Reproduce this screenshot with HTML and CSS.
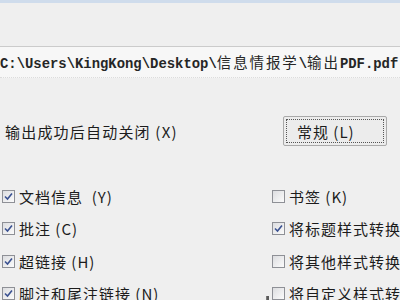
FILE: index.html
```html
<!DOCTYPE html>
<html>
<head>
<meta charset="utf-8">
<link rel="stylesheet" href="styles.css">
</head>
<body>
<div class="topbar"></div>
<div class="pathfield">C:\Users\KingKong\Desktop\<span class="cjk">信息情报学</span>\<span class="cjk">输出</span>PDF.pdf</div>
<div class="optrow">
  <span class="label">输出成功后自动关闭 (X)</span>
  <span class="btn"><span class="btn-in">常规 (L)</span></span>
</div>
<div class="grid">
  <div class="item"><span class="cb on"><svg viewBox="0 0 11 11" width="11" height="11"><path d="M2 5.5 L4.5 8 L9 2.5" fill="none" stroke="#3b5291" stroke-width="1.6"/></svg></span><span class="txt">文档信息 &nbsp;(Y)</span></div>
  <div class="item"><span class="cb"></span><span class="txt">书签 (K)</span></div>
  <div class="item"><span class="cb on"><svg viewBox="0 0 11 11" width="11" height="11"><path d="M2 5.5 L4.5 8 L9 2.5" fill="none" stroke="#3b5291" stroke-width="1.6"/></svg></span><span class="txt">批注 (C)</span></div>
  <div class="item"><span class="cb on"><svg viewBox="0 0 11 11" width="11" height="11"><path d="M2 5.5 L4.5 8 L9 2.5" fill="none" stroke="#3b5291" stroke-width="1.6"/></svg></span><span class="txt">将标题样式转换</span></div>
  <div class="item"><span class="cb on"><svg viewBox="0 0 11 11" width="11" height="11"><path d="M2 5.5 L4.5 8 L9 2.5" fill="none" stroke="#3b5291" stroke-width="1.6"/></svg></span><span class="txt">超链接 (H)</span></div>
  <div class="item"><span class="cb"></span><span class="txt">将其他样式转换</span></div>
  <div class="item"><span class="cb on"><svg viewBox="0 0 11 11" width="11" height="11"><path d="M2 5.5 L4.5 8 L9 2.5" fill="none" stroke="#3b5291" stroke-width="1.6"/></svg></span><span class="txt">脚注和尾注链接 (N)</span></div>
  <div class="item last"><span class="cursor"></span><span class="cb"></span><span class="txt">将自定义样式转换</span></div>
</div>
</body>
</html>
```
FILE: styles.css
```css
html, body {
  margin: 0;
  padding: 0;
  width: 400px;
  height: 300px;
  overflow: hidden;
  background: #efefef;
  color: #1c1c1c;
  font-family: "Noto Sans CJK SC", "Liberation Sans", sans-serif;
}
.topbar {
  height: 3px;
  background: #cfdcec;
}
.pathfield {
  margin-top: 43px;
  height: 30px;
  line-height: 29px;
  border-top: 1px solid #cbcbcb;
  border-bottom: 1px dotted #dcdcdc;
  background: #f7f7f7;
  white-space: nowrap;
  overflow: hidden;
  font-family: "Liberation Mono", "Noto Sans CJK SC", monospace;
  font-size: 13.9px;
  font-weight: bold;
  color: #262626;
}
.pathfield .cjk {
  font-family: "Noto Sans CJK SC", sans-serif;
  font-weight: normal;
  font-size: 14.5px;
  letter-spacing: 1.9px;
}
.optrow {
  display: flex;
  justify-content: space-between;
  align-items: center;
  margin-top: 38px;
  padding-left: 5px;
  padding-right: 13px;
  height: 30px;
}
.label {
  font-size: 15px;
  letter-spacing: 1.2px;
}
.btn {
  width: 104px;
  height: 30px;
  box-sizing: border-box;
  border: 1px solid #a9a9a9;
  border-radius: 2px;
  background: #ececec;
  padding: 2px;
  display: flex;
}
.btn-in {
  flex: 1;
  border: 1px dotted #555;
  display: flex;
  align-items: center;
  padding-left: 10px;
  font-size: 15px;
  letter-spacing: 1px;
}
.grid {
  margin-top: 34px;
  display: grid;
  grid-template-columns: 270px 1fr;
  grid-auto-rows: 32.5px;
  padding-left: 2px;
}
.item {
  display: flex;
  align-items: center;
  white-space: nowrap;
  overflow: hidden;
}
.item.last {
  position: relative;
  overflow: visible;
}
.cursor {
  position: absolute;
  left: -10px;
  top: 18px;
  width: 7px;
  height: 9px;
  background: #5a5a5a;
  clip-path: polygon(100% 0, 100% 100%, 0 100%, 0 70%, 60% 70%, 60% 0);
}
.cb {
  width: 13px;
  height: 13px;
  box-sizing: border-box;
  border: 1px solid #8e9096;
  background: linear-gradient(135deg, #dcdde0, #fbfbfb);
  display: flex;
  align-items: center;
  justify-content: center;
  margin-right: 4px;
  flex: none;
}
.txt {
  font-size: 15px;
  letter-spacing: 1px;
}
```
